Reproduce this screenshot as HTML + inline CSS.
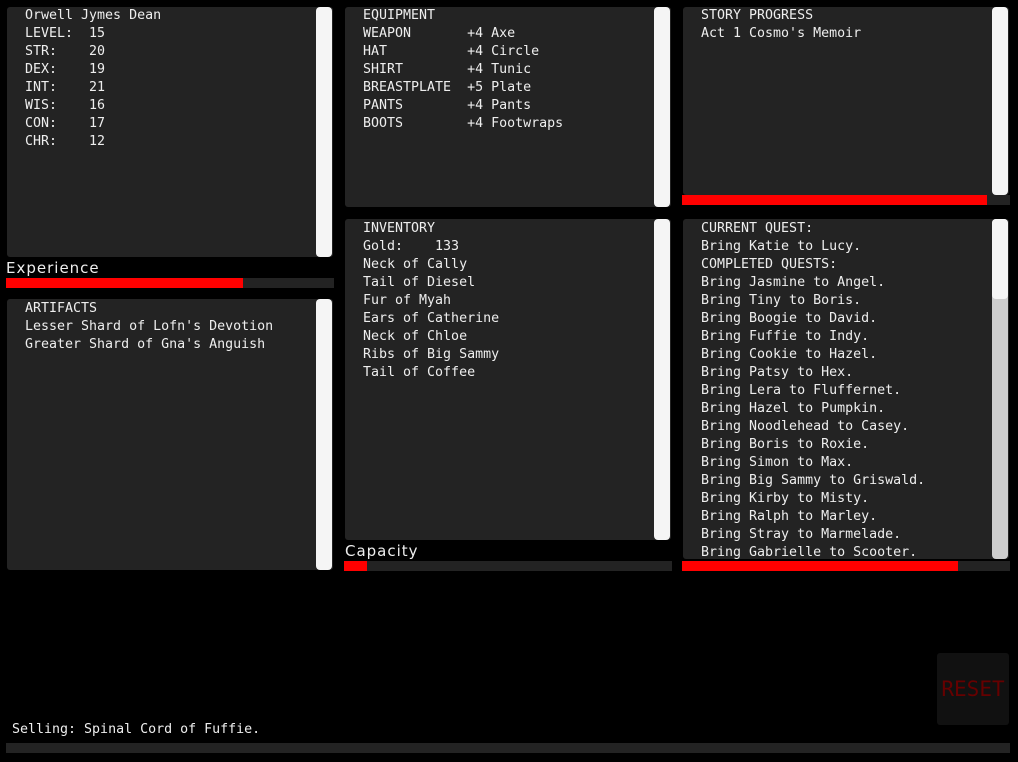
<!DOCTYPE html>
<html><head><style>
body{margin:0;width:1018px;height:762px;background:#000;overflow:hidden;font-family:"DejaVu Sans Mono",monospace;font-size:13.3px;color:#eee;position:relative}
.p{position:absolute;background:#232323;border-radius:3px}
.t{position:absolute;left:18px;top:1px;line-height:18px;white-space:pre}
.sb{position:absolute;right:1px;top:0;width:16px;background:#f5f5f5;border-radius:4px}
.bar{position:absolute;height:10px;background:#232323}
.bar i{display:block;height:100%;background:#f00}
.lbl{position:absolute;font-family:"DejaVu Sans",sans-serif;font-size:15px;letter-spacing:1px;color:#eee}
</style></head><body>
<div class="p" style="left:7px;top:7px;width:326px;height:250px"><div class="t" style="top:0">Orwell Jymes Dean
LEVEL:  15
STR:    20
DEX:    19
INT:    21
WIS:    16
CON:    17
CHR:    12</div><div class="sb" style="height:250px"></div></div>
<div class="lbl" style="left:6px;top:259px">Experience</div>
<div class="bar" style="left:6px;top:278px;width:328px"><i style="width:237px"></i></div>
<div class="p" style="left:7px;top:299px;width:326px;height:271px"><div class="t">ARTIFACTS
Lesser Shard of Lofn's Devotion
Greater Shard of Gna's Anguish</div><div class="sb" style="height:271px"></div></div>

<div class="p" style="left:345px;top:7px;width:326px;height:200px"><div class="t" style="top:0">EQUIPMENT
WEAPON       +4 Axe
HAT          +4 Circle
SHIRT        +4 Tunic
BREASTPLATE  +5 Plate
PANTS        +4 Pants
BOOTS        +4 Footwraps</div><div class="sb" style="height:200px"></div></div>
<div class="p" style="left:345px;top:219px;width:326px;height:321px"><div class="t">INVENTORY
Gold:    133
Neck of Cally
Tail of Diesel
Fur of Myah
Ears of Catherine
Neck of Chloe
Ribs of Big Sammy
Tail of Coffee</div><div class="sb" style="height:321px"></div></div>
<div class="lbl" style="left:345px;top:542px">Capacity</div>
<div class="bar" style="left:344px;top:561px;width:328px"><i style="width:23px"></i></div>

<div class="p" style="left:683px;top:7px;width:326px;height:188px"><div class="t" style="top:0">STORY PROGRESS
Act 1 Cosmo's Memoir</div><div class="sb" style="height:188px"></div></div>
<div class="bar" style="left:682px;top:195px;width:328px"><i style="width:305px"></i></div>
<div class="p" style="left:683px;top:219px;width:326px;height:340px;overflow:hidden"><div class="t">CURRENT QUEST:
Bring Katie to Lucy.
COMPLETED QUESTS:
Bring Jasmine to Angel.
Bring Tiny to Boris.
Bring Boogie to David.
Bring Fuffie to Indy.
Bring Cookie to Hazel.
Bring Patsy to Hex.
Bring Lera to Fluffernet.
Bring Hazel to Pumpkin.
Bring Noodlehead to Casey.
Bring Boris to Roxie.
Bring Simon to Max.
Bring Big Sammy to Griswald.
Bring Kirby to Misty.
Bring Ralph to Marley.
Bring Stray to Marmelade.
Bring Gabrielle to Scooter.</div><div class="sb" style="height:340px;background:#cdcdcd"></div><div class="sb" style="height:80px"></div></div>
<div class="bar" style="left:682px;top:561px;width:328px"><i style="width:276px"></i></div>

<div style="position:absolute;left:937px;top:653px;width:72px;height:72px;background:#111;border-radius:3px;color:#600;font-family:'DejaVu Sans Mono',monospace;font-size:21px;line-height:72px;text-align:center">RESET</div>
<div style="position:absolute;left:12px;top:722px;font-family:'DejaVu Sans Mono',monospace;font-size:13.3px;color:#eee">Selling: Spinal Cord of Fuffie.</div>
<div class="bar" style="left:6px;top:743px;width:1004px"></div>
</body></html>
